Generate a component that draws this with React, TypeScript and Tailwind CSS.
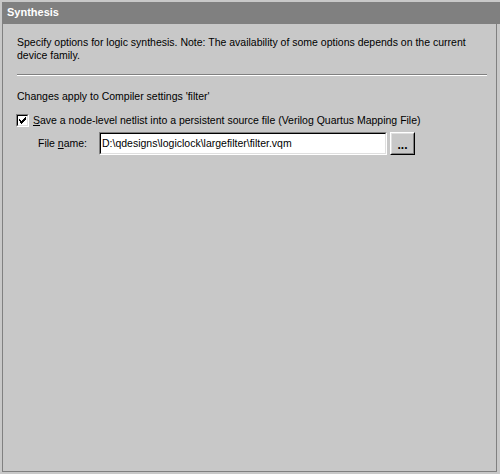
import React from 'react';

const font = "font-['Liberation_Sans',Arial,sans-serif]";

const App: React.FC = () => {
  return (
    <div className={`w-[500px] h-[474px] bg-[#c8c8c8] pt-[2px] pl-[2px] text-[10.5px] leading-[13px] text-black ${font}`}>
      {/* header bar */}
      <div className="h-[22px] bg-[#808080] pl-[5px] pt-[4px] text-white font-bold text-[11px] leading-[13px]">Synthesis</div>
      {/* body */}
      <div className="w-[495px] h-[448px] border-l border-r border-b border-[#808080] pl-[14px] pr-[10px]">
        <p className="pt-[12px] w-[462px]">
          Specify options for logic synthesis. Note: The availability of some options depends on the current device family.
        </p>
        <div className="mt-[12px] w-[470px] border-t border-b border-t-[#808080] border-b-white" />
        <p className="mt-[14px]">Changes apply to Compiler settings 'filter'</p>
        <label className="mt-[11px] flex items-center gap-[4px] -ml-[1px]">
          {/* checkbox */}
          <span className="w-[13px] h-[13px] border border-t-[#808080] border-l-[#808080] border-r-white border-b-white flex">
            <span className="flex-1 border border-t-black border-l-black border-r-[#dfdfdf] border-b-[#dfdfdf] bg-white flex items-center justify-center">
              <svg width="7" height="7" viewBox="0 0 7 7">
                <path d="M0 2h1v1h1v1h1V3h1V2h1V1h1V0h1v3h-1v1h-1v1h-1v1h-1v1h-1V6h-1V5H1V4H0z" fill="#000" />
              </svg>
            </span>
          </span>
          <span>
            <span className="underline">S</span>ave a node-level netlist into a persistent source file (Verilog Quartus Mapping File)
          </span>
        </label>
        <div className="mt-[5px] flex items-center pl-[21px]">
          <span className="w-[61px]">
            File <span className="underline">n</span>ame:
          </span>
          <div className="w-[288px] h-[23px] border border-t-[#808080] border-l-[#808080] border-r-white border-b-white flex">
            <div className="flex-1 border border-t-black border-l-black border-r-[#dfdfdf] border-b-[#dfdfdf] bg-white pl-[1px] pt-[3px]">
              D:\qdesigns\logiclock\largefilter\filter.vqm
            </div>
          </div>
          <button className="ml-[3px] w-[25px] h-[23px] border border-t-white border-l-white border-r-black border-b-black bg-[#c8c8c8] flex">
            <span className="flex-1 border border-t-[#dfdfdf] border-l-[#dfdfdf] border-r-[#808080] border-b-[#808080] font-bold text-[12px] flex items-end justify-center pb-[3px] leading-[9px]">...</span>
          </button>
        </div>
      </div>
    </div>
  );
};

export default App;
